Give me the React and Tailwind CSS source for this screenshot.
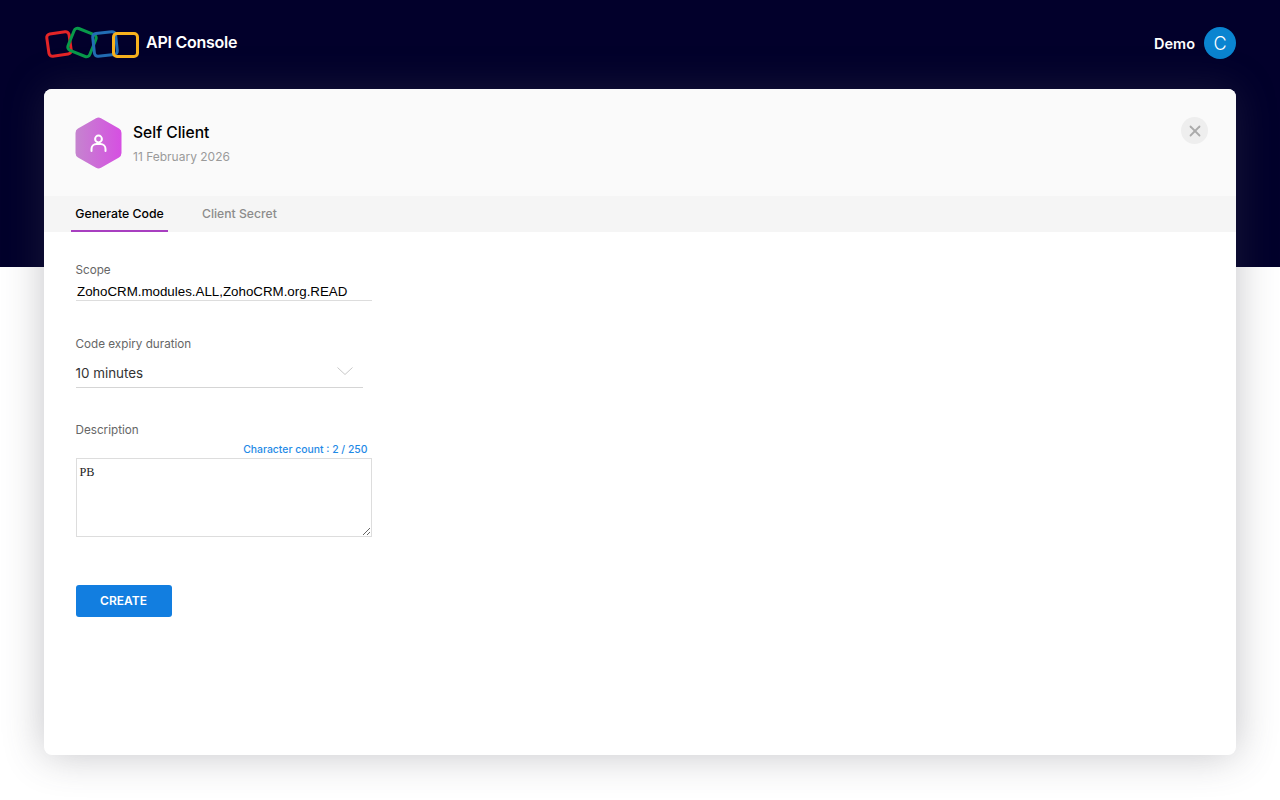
import { X } from 'lucide-react';

function Logo() {
  return (
    <svg width="96" height="36" viewBox="0 0 96 36" fill="none" strokeWidth="3">
      <rect x="3.75" y="6.75" width="22.5" height="22.5" rx="3.5" stroke="#e42527" transform="rotate(-8 15 18)" />
      <rect x="26.25" y="4.75" width="23.5" height="23.5" rx="3.5" stroke="#089949" transform="rotate(22 38 16.5)" />
      <rect x="49.5" y="6.5" width="23" height="23" rx="3.5" stroke="#226db4" transform="rotate(-6 61 18)" />
      <rect x="69.5" y="7.5" width="24" height="23" rx="3.5" stroke="#f9b21d" />
    </svg>
  );
}

function Hexagon() {
  return (
    <svg width="47" height="52" viewBox="0.5 0 47 52" className="shrink-0">
      <defs>
        <linearGradient id="hexFill" x1="0" y1="0" x2="1" y2="0">
          <stop offset="0" stopColor="#c584cf" />
          <stop offset="1" stopColor="#d64fe2" />
        </linearGradient>
      </defs>
      <path
        d="M21.5 1.2a5 5 0 0 1 5 0l18 10.4a5 5 0 0 1 2.5 4.3v20.2a5 5 0 0 1-2.5 4.3l-18 10.4a5 5 0 0 1-5 0l-18-10.4A5 5 0 0 1 1 36.1V15.9a5 5 0 0 1 2.5-4.3z"
        fill="url(#hexFill)"
      />
      <circle cx="24" cy="22" r="3.4" fill="none" stroke="#fff" strokeWidth="2" />
      <path d="M17 34v-2a5 5 0 0 1 5-5h4a5 5 0 0 1 5 5v2" fill="none" stroke="#fff" strokeWidth="2" strokeLinecap="round" />
    </svg>
  );
}

export default function App() {
  return (
    <div className="min-h-[800px] bg-white font-['Inter',sans-serif] overflow-hidden">
      {/* dark banner */}
      <div className="h-[267px] bg-[#02002b]">
        <div className="flex items-center justify-between pl-[44px] pr-[44px] pt-[26px]">
          <div className="flex items-center gap-[6px]">
            <Logo />
            <span className="text-[16px] font-semibold text-white tracking-[-0.25px] mb-[4px]">API Console</span>
          </div>
          <div className="flex items-center gap-[9px] mb-[2px]">
            <span className="text-[14.5px] font-semibold text-white mt-[2px]">Demo</span>
            <div className="w-[32px] h-[32px] rounded-full bg-[#0a84d0] flex items-center justify-center text-white text-[18px] font-light">C</div>
          </div>
        </div>
      </div>

      {/* card */}
      <div className="relative mx-[44px] mt-[-178px] h-[666px] rounded-[8px] bg-white overflow-hidden shadow-[0_0_40px_rgba(70,70,85,0.32)]">
        <div className="h-[107px] bg-[#fafafa] flex items-start justify-between pl-[31px] pr-[28px] pt-[28px]">
          <div className="flex gap-[11px]">
            <Hexagon />
            <div>
              <div className="text-[15.6px] font-medium text-black leading-[20px] mt-[6px]">Self Client</div>
              <div className="text-[12px] text-[#9a9a9a] leading-[18px] mt-[5px]">11 February 2026</div>
            </div>
          </div>
          <div className="w-[27px] h-[27px] rounded-full bg-[#eeeeee] flex items-center justify-center">
            <X size={18} strokeWidth={2.4} className="text-[#aaaaaa]" />
          </div>
        </div>

        <div className="h-[36px] bg-[#f5f5f5] flex pl-[27px]">
          <div className="w-[97px] h-full pt-[3px] flex items-center justify-center border-b-2 border-[#a83fc0] text-[12.3px] font-medium text-black">Generate Code</div>
          <div className="ml-[34px] h-full pt-[1px] flex items-center text-[12.2px] font-medium text-[#8c8c8c]">Client Secret</div>
        </div>

        <div className="pl-[31.5px] pt-[30px]">
          <div className="text-[11.7px] leading-[16px] text-[#666666]">Scope</div>
          <div className="w-[296.5px] h-[21px] mt-[2px] pt-[2px] border-b border-[#dddddd] pl-[1.5px] font-['Liberation_Sans',sans-serif] text-[13.33px] leading-[20px] text-black">
            ZohoCRM.modules.ALL,ZohoCRM.org.READ
          </div>

          <div className="text-[11.7px] leading-[16px] text-[#666666] mt-[35px]">Code expiry duration</div>
          <div className="w-[287.5px] h-[30px] mt-[6px] pt-[2px] border-b border-[#d5d5d5] flex items-center justify-between pr-[10px] text-[13.4px] text-[#333333]">
            <span>10 minutes</span>
            <svg width="16" height="8" viewBox="0 0 16 8" fill="none" stroke="#c8c8c8" strokeWidth="1" className="-mt-[5px]">
              <path d="M0.5 0.5L8 7.5L15.5 0.5" />
            </svg>
          </div>

          <div className="text-[11.7px] leading-[16px] text-[#666666] mt-[34px]">Description</div>
          <div className="w-[296px] mt-[4px] text-right pr-[4px] text-[10.4px] leading-[16px] font-medium text-[#1f8ae6]">Character count : 2 / 250</div>
          <textarea
            defaultValue="PB"
            className="block w-[296.5px] h-[79px] border border-[#dddddd] px-[3px] pt-[4px] pb-[2px] font-['Liberation_Serif',serif] text-[12.3px] text-[#222222] outline-none"
          />

          <button className="mt-[48px] w-[96px] h-[32px] rounded-[3px] bg-[#127ee0] text-white text-[12px] font-semibold">CREATE</button>
        </div>
      </div>
    </div>
  );
}
